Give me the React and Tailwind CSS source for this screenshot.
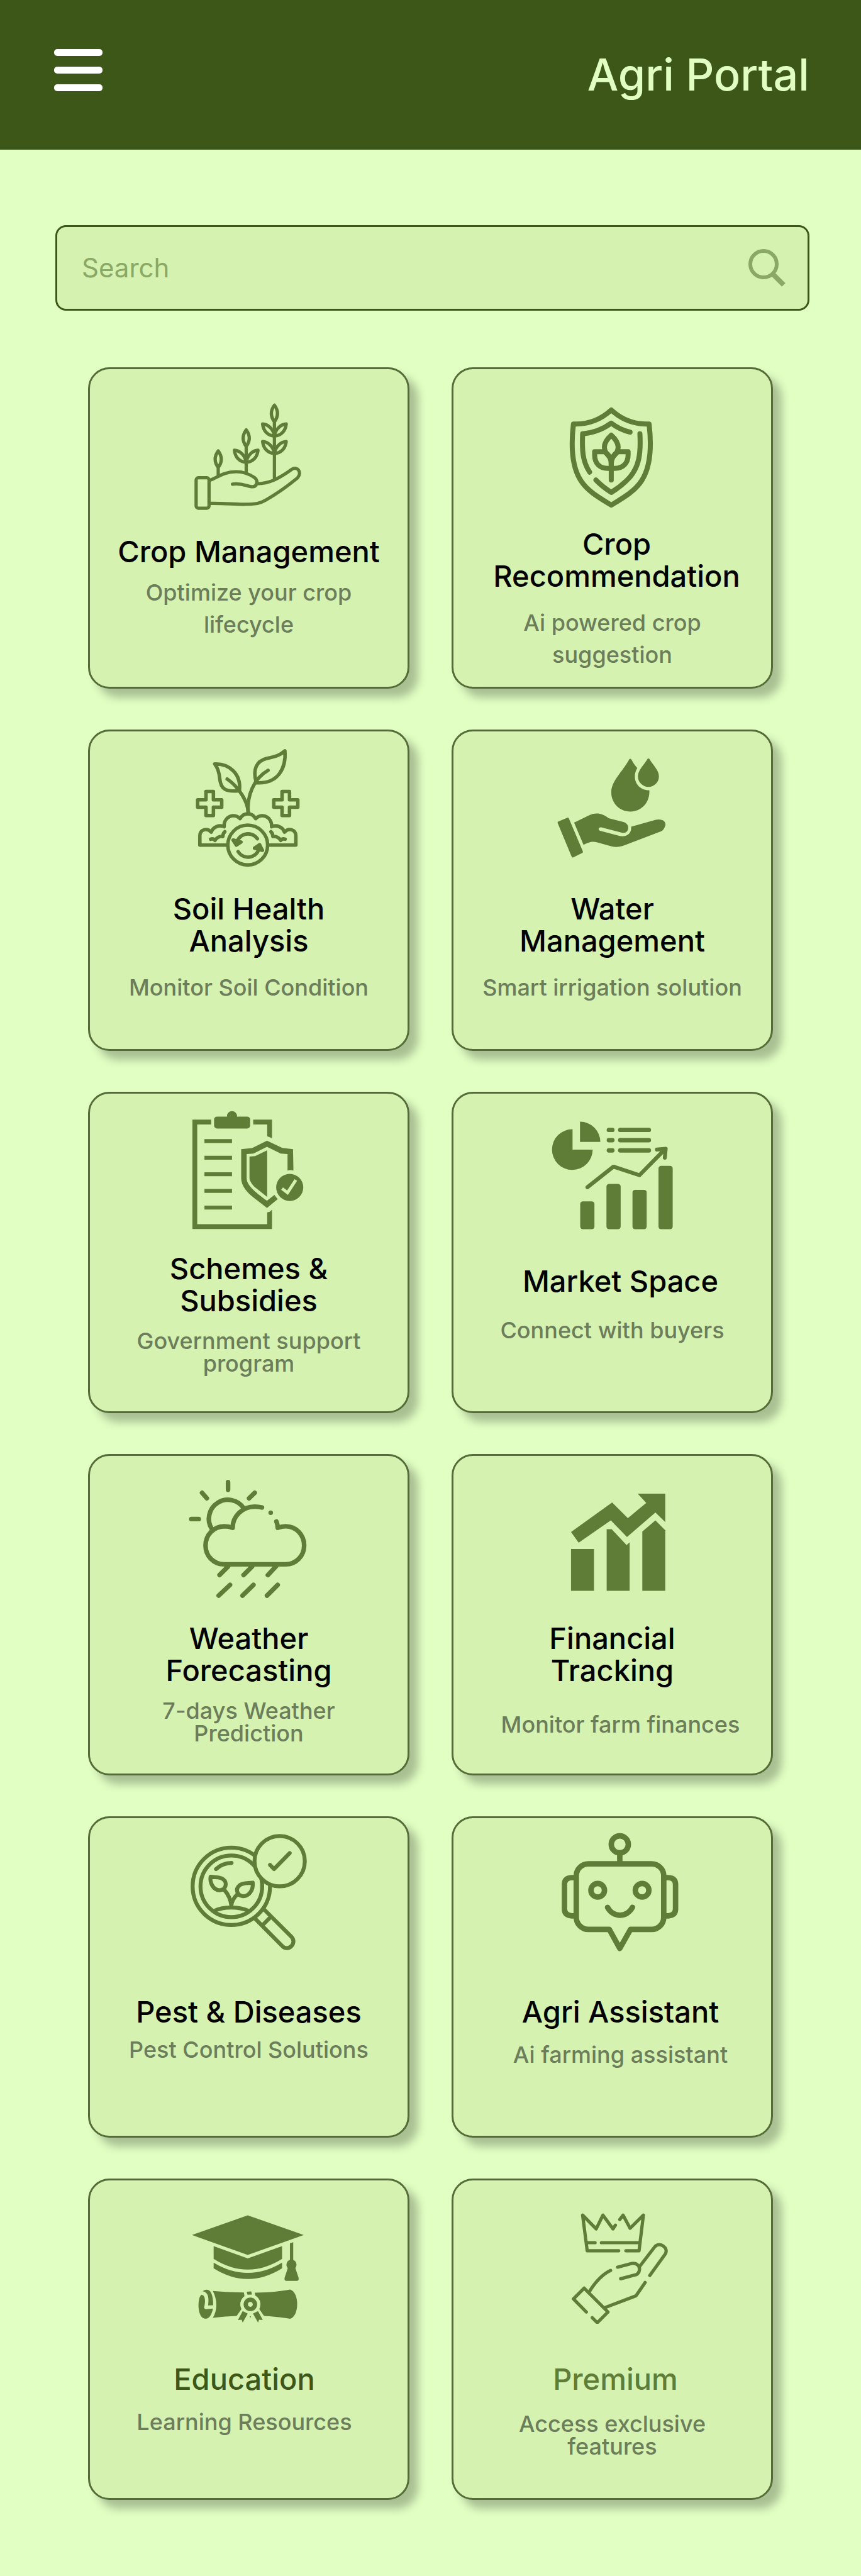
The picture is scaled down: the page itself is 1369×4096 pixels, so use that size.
import React from "react";

const INK = "#607d38";
const CARD = "#d5f2b0";

/* Every card drawing shares one square slot; `top` shifts the visible window of its artboard. */
function Art({ top, stroke = 0, children }) {
  return (
    <svg
      className="size-[210px] shrink-0"
      viewBox={`468 ${top} 604 604`}
      fill={stroke ? "none" : INK}
      stroke={stroke ? INK : "none"}
      strokeWidth={stroke || undefined}
      strokeLinecap="round"
      strokeLinejoin="round"
      aria-hidden="true"
    >
      {children}
    </svg>
  );
}

function SideLeaves({ x, y }) {
  return (
    <g transform={`translate(${x} ${y})`}>
      <path d="M0 0C6-36 33-54 54-55C51-26 33-2 0 0Z" />
      <path d="M0 0C-6-36-33-54-54-55C-51-26-33-2 0 0Z" />
    </g>
  );
}

function CropsInHand() {
  return (
    <Art top={102} stroke={15}>
      <rect x="528" y="547" width="59" height="139" rx="10" />
      <path d="M629 424Q601 462 629 500Q657 462 629 424ZM629 500V540" />
      <path d="M757 328Q729 366 757 404Q785 366 757 328ZM757 404V520" />
      <SideLeaves x={757} y={476} />
      <path d="M886 215Q858 253 886 291Q914 253 886 215ZM886 291V548" />
      <SideLeaves x={886} y={356} />
      <SideLeaves x={886} y={436} />
      <path d="M592 558C625 547 650 520 711 519C740 519 770 529 795 546C814 560 806 588 785 588C762 588 740 569 694 576" />
      <path d="M808 574C860 574 905 552 966 508C990 492 1014 522 992 547C950 582 890 624 846 649C820 664 805 668 745 668C700 668 650 663 595 664" />
    </Art>
  );
}

function CropShield() {
  return (
    <Art top={102} stroke={23}>
      <path d="M764 237C722 276 670 304 591 301C578 410 586 500 625 560C655 607 705 636 764 672C823 636 873 607 903 560C942 500 950 410 937 301C858 304 806 276 764 237Z" />
      <path d="M850 338C820 331 790 317 764 297C730 322 690 341 633 346C630 420 632 470 665 521" />
      <path d="M895 346C900 440 890 495 850 543C825 571 795 595 764 614C740 598 715 580 694 557" />
      <path d="M764 352C722 390 722 425 764 458C806 425 806 390 764 352Z" />
      <path d="M764 458V557" />
      <path d="M732 428H688V442C688 482 712 504 748 504H764V485C764 455 750 438 732 428" />
      <path d="M796 428H841V442C841 482 816 504 780 504H764V485C764 455 778 438 796 428" />
    </Art>
  );
}

function SoilHealth() {
  const plus = "M573 329h34v38h38v34h-38v38h-34v-38h-38v-34h38z";
  const half = (
    <>
      <path d="M673 574H545V533C545 500 580 495 597 515C605 490 635 480 656 490C653 445 700 425 729 453C738 437 750 431 764.500 431" />
      <path d="M594 547C604 544 611 548 614 553C622 540 635 533 650 535C650 525 654 518 659 513" />
    </>
  );
  return (
    <Art top={106} stroke={16}>
      <path d="M613 203C680 200 735 250 726 325C660 333 640 315 636 270C633 240 628 222 613 203Z" />
      <path d="M670 272C720 305 765 375 766 425" />
      <path d="M934 143C940 220 905 295 803 289C785 225 805 190 850 178C890 169 910 165 934 143Z" />
      <path d="M857 232C790 270 760 350 766 425" />
      <path d={plus} />
      <path d={plus} transform="translate(348 0)" />
      {half}
      <g transform="matrix(-1 0 0 1 1529 0)">{half}</g>
      <circle cx="764" cy="574" r="91" />
      <path d="M808 545A53 53 0 0 0 712 572M720 604A53 53 0 0 0 818 573" />
      <path d="M697 551L712 574L733 560ZM795 588L818 573L831 598Z" fill={INK} />
    </Art>
  );
}

function WaterHand() {
  return (
    <Art top={106}>
      <path d="M929 181Q934 175 939 181C950 203 982 230 982 260A48 48 0 0 1 886 260C886 230 918 203 929 181Z" />
      <path d="M846 182Q851 176 856 182C862 195 871 207 883 222C854 270 885 325 938 323C942 380 900 421 851 421C800 421 764 380 764 333C764 280 815 240 846 182Z" />
      <path d="M594 471L665 437C695 423 725 430 752 451L822 469C853 480 845 522 815 518L718 493C705 491 702 506 713 509L800 532C835 540 858 520 855 490L965 459C1000 450 1018 470 1010 487C1005 503 998 510 985 514L825 575C800 584 785 585 765 580L700 562C680 556 665 558 637 573Z" />
      <path d="M524 471L565 454L629 605L588 625Z" stroke={INK} strokeWidth="11" />
    </Art>
  );
}

function SchemeClipboard() {
  return (
    <Art top={109}>
      <path d="M789 176H875V261L853 252V198H789Z" />
      <path d="M511 176H597V198H533V654H853V600L865 597L875 588V676H511Z" />
      <rect x="610" y="162" width="165" height="55" rx="14" />
      <circle cx="692" cy="160" r="23" />
      <path d="M566 265h126v18h-126zM566 341h126v18h-126zM566 417h126v18h-126zM566 493h126v18h-126zM566 569h126v18h-126z" />
      <path d="M852 272L922 305L971 311L973 409Q960 405 946 409V333L915 331L852 300L790 331L759 333V443C759 475 795 505 852 547L886 520L901 540L852 580L790 532C765 513 734 480 734 445V311L784 306Z" />
      <path d="M853 316V530L798 486C785 474 772 455 772 443V345L798 343Z" />
      <circle cx="956" cy="486" r="62" />
      <path d="M921 491L946 510L984 452" fill="none" stroke={CARD} strokeWidth="14" strokeLinecap="butt" strokeLinejoin="miter" />
    </Art>
  );
}

function MarketChart() {
  return (
    <Art top={109}>
      <path d="M587 220V313H679A93 93 0 1 1 587 220Z" />
      <path d="M621 185A93 93 0 0 1 714 278H621Z" />
      {[213, 260, 307].map((y) => (
        <g key={y}>
          <rect x="743" y={y} width="36" height="20" rx="10" />
          <rect x="795" y={y} width="151" height="20" rx="10" />
        </g>
      ))}
      <rect x="622" y="550" width="65" height="127" rx="12" />
      <rect x="742" y="470" width="65" height="207" rx="12" />
      <rect x="861" y="497" width="65" height="180" rx="12" />
      <rect x="980" y="387" width="65" height="290" rx="12" />
      <path d="M655 485L774 391L893 430L1010 311M973 313L1013 309L1009 350" fill="none" stroke={INK} strokeWidth="18" />
    </Art>
  );
}

function RainCloud() {
  return (
    <Art top={99} stroke={21}>
      <path d="M674 167V202M555 216L577 241M796 216L770 241M506 336H540" />
      <path d="M600 382A87 87 0 0 1 747 288" />
      <path d="M829 283C818 280 808 279 796 279C740 279 695 322 695 376C683 371 670 369 656 369C608 371 571 408 571 457C571 505 608 543 656 543H937C985 543 1022 505 1022 457C1022 408 985 369 937 369C925 369 913 372 901 376C901 366 899 356 895 347" />
      <path d="M869 307H869.100" />
      <path d="M674 553L635 592M784 553L745 592M893 553L856 592" />
      <path d="M683 637L631 686M790 637L740 686M901 637L852 686" />
    </Art>
  );
}

function GrowthBars() {
  return (
    <Art top={99}>
      <path d="M580 473H685V664H580Z" />
      <path d="M743 382H766L834 455L848 443V664H743Z" />
      <path d="M906 393L966 342L1011 387V664H906Z" />
      <path d="M580 395L768 260L840 332L924 262L885 220H1011V350L966 306L836 418L762 342L615 444Z" />
    </Art>
  );
}

function PestLens() {
  return (
    <Art top={103} stroke={18}>
      <circle cx="689" cy="363" r="177" />
      <circle cx="689" cy="363" r="141" />
      <path d="M619 284Q648 257 690 256" />
      <path d="M594 319C590 345 605 380 635 381C665 380 672 345 652 331C640 318 615 323 594 319Z" />
      <path d="M787 346C790 380 770 408 743 408C715 405 705 375 727 358C745 345 765 350 787 346Z" />
      <path d="M656 378C680 405 687 430 689 452M718 398C700 415 690 435 689 452" />
      <path d="M611 475C655 455 720 455 768 475" />
      <path d="M838 468L965 595C990 622 950 665 922 636L797 510M868 504L833 539" />
      <circle cx="910" cy="248" r="115" fill={CARD} />
      <path d="M866 265L884 284L956 211" />
    </Art>
  );
}

function Robot() {
  const ear = "M600 323H583Q550 325 550 354V466Q550 495 583 498H600";
  return (
    <Art top={103} stroke={25}>
      <circle cx="803" cy="171" r="39" />
      <path d="M803 214V256" />
      <path d="M755 560H660C628 560 604 534 604 505V315C604 285 628 260 660 260H948C980 260 1004 285 1004 315V505C1004 534 980 560 948 560H852L803 647Z" />
      <path d={ear} />
      <path d={ear} transform="matrix(-1 0 0 1 1608 0)" />
      <circle cx="702" cy="381" r="31" />
      <circle cx="905" cy="381" r="31" />
      <path d="M747 459C772 507 835 507 861 459" />
    </Art>
  );
}

function CapAndScroll() {
  return (
    <Art top={106}>
      <path d="M764 214L1020 304L764 395L509 304Z" />
      <path d="M608 355L764 411L921 355V413Q764 511 608 413Z" />
      <path d="M608 430Q764 524 921 430V456Q764 554 608 456Z" />
      <path d="M957 342L972 337V425H957Z" />
      <ellipse cx="964" cy="440" rx="23" ry="24" />
      <path d="M949 450L933 498Q929 514 942 514H987Q1000 514 996 498L980 450Z" />
      <path d="M553 577C533 585 530 687 572 687C590 685 600 665 605 640L572 643C565 642 563 636 566 629C572 600 568 580 553 577Z" />
      <path d="M558 561C588 566 586 600 583 626L606 625C606 570 590 540 558 561Z" />
      <path d="M604 560C700 568 850 574 958 553C1001 565 1001 675 958 687C910 679 870 676 838 674H714C680 675 640 678 604 683C626 650 626 600 604 560Z" />
      <g fill={CARD}>
        <path d="M746 564H796L800 590H750Z" />
        <path d="M737 640L712 676V704H840V676L815 640Z" />
        <circle cx="776" cy="621" r="46" />
      </g>
      <path d="M759 563L780 562L783 576L763 577Z" />
      <circle cx="776" cy="621" r="21" fill="none" stroke={INK} strokeWidth="20" />
      <path d="M741 652L764 663L741 704L736 691L719 693ZM811 652L788 663L811 704L816 691L833 693Z" />
      <circle cx="776" cy="678" r="3" />
    </Art>
  );
}

function CrownHand() {
  return (
    <Art top={106} stroke={15}>
      <path d="M783 259L772 276L726 213L695 276L633 213L654 376H798" />
      <path d="M803 233L818 213L850 273L911 213L891 376H831" />
      <path d="M655 339H690M719 339H888" />
      <path d="M793 451L858 434C880 430 895 446 893 463C891 479 883 485 870 487L807 504" />
      <path d="M893 449L962 359C985 330 1030 364 1010 392L940 489" />
      <path d="M919 521L877 582L732 637" />
      <path d="M761 466C720 485 690 520 661 567" />
      <path d="M650 656L591 596L640 547L749 656L700 705L677 682" />
    </Art>
  );
}

const cards = [
  { icon: CropsInHand, title: ["Crop Management"], text: ["Optimize your crop", "lifecycle"], titleBox: "mt-9 text-black", textBox: "mt-[15px] leading-[51px]" },
  { icon: CropShield, title: ["Crop", "Recommendation"], text: ["Ai powered crop", "suggestion"], titleBox: "mt-6 pl-[14px] text-black", textBox: "mt-6 leading-[51px]" },
  { icon: SoilHealth, title: ["Soil Health", "Analysis"], text: ["Monitor Soil Condition"], titleBox: "mt-7 text-black", textBox: "mt-6 leading-[51px]" },
  { icon: WaterHand, title: ["Water", "Management"], text: ["Smart irrigation solution"], titleBox: "mt-7 text-black", textBox: "mt-6 leading-[51px]" },
  { icon: SchemeClipboard, title: ["Schemes &", "Subsidies"], text: ["Government support", "program"], titleBox: "mt-6 text-black", textBox: "mt-[21px] leading-[36px]" },
  { icon: MarketChart, title: ["Market Space"], text: ["Connect with buyers"], titleBox: "mt-[44px] pl-[26px] text-black", textBox: "mt-7 leading-[51px]" },
  { icon: RainCloud, title: ["Weather", "Forecasting"], text: ["7-days Weather", "Prediction"], titleBox: "mt-9 text-black", textBox: "mt-[21px] leading-[36px]" },
  { icon: GrowthBars, title: ["Financial", "Tracking"], text: ["Monitor farm finances"], titleBox: "mt-9 text-black", textBox: "mt-9 pl-[26px] leading-[51px]" },
  { icon: PestLens, title: ["Pest & Diseases"], text: ["Pest Control Solutions"], titleBox: "mt-[54px] text-black", textBox: "mt-[10px] leading-[51px]" },
  { icon: Robot, title: ["Agri Assistant"], text: ["Ai farming assistant"], titleBox: "mt-[54px] pl-[26px] text-black", textBox: "mt-[18px] pl-[26px] leading-[51px]" },
  { icon: CapAndScroll, title: ["Education"], text: ["Learning Resources"], titleBox: "mt-[62px] pr-[14px] text-[#3d5719]", textBox: "mt-[18px] pr-[14px] leading-[51px]" },
  { icon: CrownHand, title: ["Premium"], text: ["Access exclusive", "features"], titleBox: "mt-[62px] pl-[10px] text-[#607d38]", textBox: "mt-7 leading-[36px]" },
];

function Card({ icon: Icon, title, text, titleBox, textBox }) {
  return (
    <a
      href="#"
      className="flex aspect-square flex-col items-center rounded-[34px] border-3 border-[#556b38] bg-[#d5f2b0] pt-[18px] text-center font-medium whitespace-nowrap shadow-[14px_14px_14px_rgba(0,0,0,0.25)]"
    >
      <Icon />
      <h2 className={`text-[47px] leading-[51px] ${titleBox}`}>
        {title.map((line) => (
          <span key={line} className="block">{line}</span>
        ))}
      </h2>
      <p className={`text-[36px] text-[#6b7d5a] ${textBox}`}>
        {text.map((line) => (
          <span key={line} className="block">{line}</span>
        ))}
      </p>
    </a>
  );
}

export default function App() {
  return (
    <div className="min-h-screen bg-[#e1ffc3] font-['Inter',sans-serif]">
      <header className="flex items-start justify-between bg-[#3d5719] py-[78px] pr-[82px] pl-[86px]">
        <button type="button" aria-label="Open menu">
          <svg className="h-[67px] w-[77px]" viewBox="0 0 77 67" fill="#fff" aria-hidden="true">
            <rect y="0" width="77" height="11" rx="5" />
            <rect y="28" width="77" height="11" rx="5" />
            <rect y="56" width="77" height="11" rx="5" />
          </svg>
        </button>
        <h1 className="text-[70px] leading-[82px] font-medium text-[#e1ffc3]">Agri Portal</h1>
      </header>

      <main className="pt-[120px] pb-[121px]">
        <form
          role="search"
          className="mr-[82px] ml-[88px] flex h-[136px] items-center rounded-[17px] border-3 border-[#3d5719] bg-[#d5f2b0] pr-[35px] pl-[39px]"
        >
          <input
            type="search"
            aria-label="Search"
            placeholder="Search"
            className="min-w-0 flex-1 bg-transparent text-[42px] leading-[60px] text-[#3d5719] outline-none placeholder:text-[#8aa866] placeholder:opacity-100"
          />
          <button type="button" aria-label="Submit search">
            <svg className="size-[60px]" viewBox="0 0 60 60" fill="none" stroke="#8aa866" aria-hidden="true">
              <circle cx="25" cy="24" r="21" strokeWidth="6" />
              <path d="M39 39L57 57" strokeWidth="8" />
            </svg>
          </button>
        </form>

        <div className="mt-[90px] grid grid-cols-2 gap-x-[67px] gap-y-[65px] px-[140px]">
          {cards.map((card) => (
            <Card key={card.title.join(" ")} {...card} />
          ))}
        </div>
      </main>
    </div>
  );
}
